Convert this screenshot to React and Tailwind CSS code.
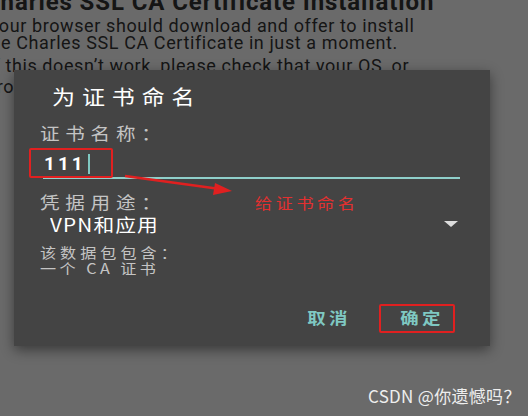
export default function App() {
  const cjk = { fontFamily: '"Noto Sans CJK SC", "Noto Sans", sans-serif' };
  return (
    <div className="relative w-[528px] h-[416px] overflow-hidden bg-[#6a6a6a]" style={{ fontFamily: 'Roboto, "Noto Sans CJK SC", sans-serif' }}>
      {/* page behind the dialog */}
      <div className="flex flex-col text-[#151515] whitespace-nowrap">
        <div className="ml-[-16px] mt-[-12px] h-[28px] leading-[28px] text-[24px] font-bold tracking-[0.9px]">Charles SSL CA Certificate Installation</div>
        <div className="ml-[-12px] mt-[1px] h-[17px] leading-[17px] text-[18px] tracking-[0.6px]">Your browser should download and offer to install</div>
        <div className="ml-[-16px] h-[17px] leading-[17px] text-[18px] tracking-[0.6px]">the Charles SSL CA Certificate in just a moment.</div>
        <div className="ml-[-12px] mt-[4px] h-[21px] leading-[21px] text-[18px] tracking-[0.6px]">If this doesn’t work, please check that your OS, or</div>
        <div className="ml-[-14px] h-[21px] leading-[21px] text-[18px] tracking-[0.6px]">browser, is supported. This page is a bit tricky.</div>
      </div>

      {/* dialog */}
      <div className="absolute left-[14px] top-[70px] w-[476px] h-[276px] bg-[#444444] shadow-[0_4px_12px_rgba(0,0,0,0.45)]" style={cjk}>
        <div className="flex flex-col items-start">
          <div className="ml-[38px] mt-[13px] h-[28px] leading-[28px] text-[20px] text-white tracking-[6px] origin-left scale-x-115">为证书命名</div>
          <div className="ml-[26px] mt-[10px] h-[24px] leading-[24px] text-[17px] text-[#c4c4c4] tracking-[5px] origin-left scale-x-115">证书名称：</div>
          <div className="ml-[29px] mt-[6px] w-[417px] flex items-center h-[28px] border-b-2 border-[#8fcfca]">
            <span className="ml-[1px] text-[19px] font-bold text-white tracking-[3px]" style={{ fontFamily: 'Roboto, sans-serif' }}>111</span>
            <span className="ml-[2px] w-[2px] h-[20px] bg-[#7fc8c2]"></span>
          </div>
          <div className="ml-[26px] mt-[12px] h-[22px] leading-[22px] text-[17px] text-[#c4c4c4] tracking-[5px] origin-left scale-x-115">凭据用途：</div>
          <div className="ml-[36px] w-[408px] h-[22px] flex items-center justify-between">
            <span className="text-[18px] leading-[22px] text-white tracking-[1px] origin-left scale-x-115">VPN和应用</span>
            <span className="w-0 h-0 border-l-[7px] border-r-[7px] border-t-[6px] border-l-transparent border-r-transparent border-t-[#dddddd]"></span>
          </div>
          <div className="ml-[26px] mt-[9px] h-[16px] leading-[16px] text-[14px] text-[#c4c4c4] tracking-[3.5px] origin-left scale-x-115">该数据包包含：</div>
          <div className="ml-[26px] h-[16px] leading-[16px] text-[14px] text-[#c4c4c4] tracking-[3px] origin-left scale-x-115">一个 CA 证书</div>
          <div className="mt-[31px] self-stretch mr-[49px] flex justify-end items-center gap-[55px] h-[20px]">
            <span className="text-[16px] font-bold text-[#7fc8c2] tracking-[3px] scale-x-115">取消</span>
            <span className="text-[16px] font-bold text-[#7fc8c2] tracking-[3px] scale-x-115">确定</span>
          </div>
        </div>
      </div>

      {/* red annotations */}
      <div className="absolute left-[29px] top-[148px] w-[84px] h-[30px] border-2 border-[#e02020] rounded-[2px]"></div>
      <div className="absolute left-[379px] top-[304px] w-[76px] h-[29px] border-2 border-[#e02020] rounded-[2px]"></div>
      <svg className="absolute left-[120px] top-[170px]" width="120" height="30" viewBox="0 0 120 30">
        <line x1="5" y1="6" x2="100" y2="19" stroke="#e02020" strokeWidth="2.5" />
        <polygon points="95,13 112,21 93,25" fill="#e02020" />
      </svg>
      <div className="absolute left-[255px] top-[194px] text-[15px] leading-[18px] text-[#e33030] tracking-[3px] origin-left scale-x-115" style={cjk}>给证书命名</div>

      <div className="absolute left-[368px] top-[386px] text-[17px] leading-[20px] text-[#eeeeee] tracking-[0.3px]" style={cjk}>CSDN @你遗憾吗？</div>
    </div>
  );
}
